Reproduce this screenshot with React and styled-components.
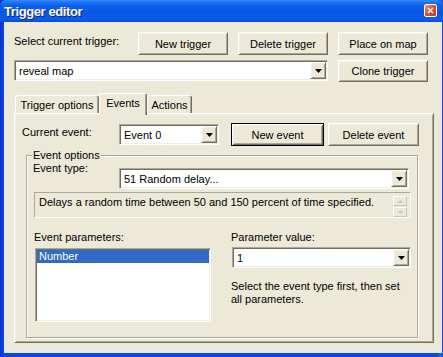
import React from 'react';
import styled, { createGlobalStyle, css } from 'styled-components';

const GlobalStyle = createGlobalStyle`
  html, body {
    margin: 0;
    padding: 0;
    background: #0842d8;
  }
  body {
    font-family: "Liberation Sans", Arial, sans-serif;
    font-size: 11px;
    color: #000;
  }
  * {
    box-sizing: border-box;
  }
`;

const raised = css`
  border: 1px solid;
  border-color: #fff #716f64 #716f64 #fff;
  box-shadow: inset 1px 1px #f1efe2, inset -1px -1px #aca899;
`;

const sunken = css`
  border: 1px solid;
  border-color: #aca899 #fff #fff #aca899;
  box-shadow: inset 1px 1px #716f64, inset -1px -1px #f1efe2;
`;

const Window = styled.div`
  width: 443px;
  height: 357px;
  display: flex;
  flex-direction: column;
  overflow: hidden;
  background: linear-gradient(to right, #0831d9 0, #0b47e3 4px, #0b47e3 437px, #166aee 440px, #0c4fe6 443px);
`;

const TitleBar = styled.div`
  height: 22px;
  flex: none;
  display: flex;
  align-items: center;
  justify-content: space-between;
  padding: 0 6px 0 4px;
  border-radius: 6px 6px 0 0;
  background: linear-gradient(
    to bottom,
    #3d8dfb 0%,
    #1c74f6 10%,
    #0a61ec 25%,
    #0857e6 55%,
    #085ceb 80%,
    #0a5be6 92%,
    #0846d4 100%
  );
`;

const Title = styled.span`
  color: #fff;
  font-family: "Liberation Sans", Arial, sans-serif;
  font-weight: bold;
  font-size: 13px;
  letter-spacing: -0.4px;
  text-shadow: 1px 1px #0f1f8a;
`;

const CloseButton = styled.span`
  width: 13px;
  height: 13px;
  margin-top: -1px;
  border: 1px solid #fff;
  border-radius: 2px;
  background: linear-gradient(135deg, #f09a7c 0%, #e2532b 45%, #c8381a 100%);
  display: flex;
  align-items: center;
  justify-content: center;
`;

const Frame = styled.div`
  flex: 1;
  display: flex;
  padding: 0 5px 4px 4px;
`;

const Body = styled.div`
  flex: 1;
  display: flex;
  flex-direction: column;
  background: #ece9d8;
  padding: 10px 8px 10px 10px;
`;

const TopGrid = styled.div`
  display: grid;
  grid-template-columns: 114px 90px 90px 90px;
  grid-template-rows: 23px 22px;
  column-gap: 10px;
  row-gap: 5px;
`;

const Label = styled.span`
  display: block;
  line-height: 13px;
  white-space: nowrap;
  padding-top: ${p => p.$top || 0}px;
  width: ${p => (p.$w ? `${p.$w}px` : 'auto')};
  flex: none;
`;

const Button = styled.div`
  width: ${p => (p.$w ? `${p.$w}px` : 'auto')};
  height: ${p => p.$h || 23}px;
  margin-left: ${p => p.$left || 0}px;
  background: #ece9d8;
  display: flex;
  align-items: center;
  justify-content: center;
  flex: none;
  ${p =>
    p.$default
      ? css`
          border: 1px solid #000;
          box-shadow: inset 1px 1px #fff, inset -1px -1px #716f64,
            inset 2px 2px #f1efe2, inset -2px -2px #aca899;
        `
      : raised}
`;

const Combo = styled.div`
  grid-column: ${p => p.$span || 'auto'};
  width: ${p => (p.$w ? `${p.$w}px` : 'auto')};
  flex: ${p => (p.$grow ? 1 : 'none')};
  height: 21px;
  margin-top: ${p => p.$top || 0}px;
  margin-left: ${p => p.$left || 0}px;
  background: #fff;
  ${sunken};
  padding: 1px;
  display: flex;
`;

const ComboText = styled.span`
  flex: 1;
  padding-left: 3px;
  display: flex;
  align-items: center;
`;

const ComboArrow = styled.span`
  width: 16px;
  background: #ece9d8;
  ${raised};
  display: flex;
  align-items: center;
  justify-content: center;
`;

const TabStrip = styled.div`
  margin-top: 11px;
  height: 20px;
  display: flex;
  align-items: flex-end;
  padding-left: 1px;
`;

const Tab = styled.div`
  width: ${p => p.$w}px;
  height: ${p => (p.$active ? 22 : 18)}px;
  margin-bottom: ${p => (p.$active ? -2 : 0)}px;
  padding-bottom: ${p => (p.$active ? 4 : 0)}px;
  position: relative;
  z-index: ${p => (p.$active ? 1 : 0)};
  background: #ece9d8;
  border: 1px solid;
  border-bottom: none;
  border-color: #fff #716f64 #fff #fff;
  border-radius: 3px 3px 0 0;
  box-shadow: inset -1px 0 #aca899;
  display: flex;
  align-items: center;
  justify-content: center;
`;

const Panel = styled.div`
  flex: 1;
  display: flex;
  flex-direction: column;
  ${raised};
  padding: 9px 7px 4px 7px;
`;

const EventRow = styled.div`
  display: flex;
  align-items: flex-start;
  height: 23px;
`;

const Group = styled.div`
  flex: 1;
  position: relative;
  margin: 9px 8px 0 4px;
  border: 1px solid #aca899;
  box-shadow: inset 1px 1px #fff, 1px 1px #fff;
  padding: 4px 6px 0 6px;
  display: flex;
  flex-direction: column;
`;

const Legend = styled.span`
  position: absolute;
  top: -7px;
  left: 5px;
  padding: 0 1px;
  line-height: 13px;
  background: #ece9d8;
`;

const TypeRow = styled.div`
  display: flex;
  align-items: flex-start;
  padding-right: 2px;
`;

const Description = styled.div`
  margin: 3px 0 0 1px;
  height: 26px;
  border: 1px solid;
  border-color: #aca899 #fff #fff #aca899;
  display: flex;
  padding: 2px 3px 0 4px;
`;

const DescText = styled.span`
  flex: 1;
  line-height: 13px;
  padding-top: 1px;
`;

const ScrollButtons = styled.div`
  display: flex;
  flex-direction: column;
  gap: 1px;
  padding-top: 1px;
`;

const ScrollButton = styled.span`
  width: 14px;
  height: 10px;
  border: 1px solid;
  border-color: #fff #c9c6b8 #c9c6b8 #fff;
  display: flex;
  align-items: center;
  justify-content: center;
`;

const Columns = styled.div`
  display: grid;
  grid-template-columns: 177px 180px;
  column-gap: 20px;
  margin: 13px 0 0 1px;
`;

const Column = styled.div`
  display: flex;
  flex-direction: column;
`;

const ListBox = styled.div`
  width: 176px;
  height: 74px;
  margin: 4px 0 0 1px;
  background: #fff;
  ${sunken};
  padding: 1px;
`;

const ListItem = styled.div`
  height: 13px;
  line-height: 13px;
  padding-left: 2px;
  background: ${p => (p.$selected ? '#316ac5' : 'transparent')};
  color: ${p => (p.$selected ? '#fff' : '#000')};
`;

const HelpText = styled.p`
  margin: 12px 0 0 0;
  line-height: 13px;
  width: 180px;
`;

const Arrow = () => (
  <svg width="7" height="4" viewBox="0 0 7 4">
    <polygon points="0,0 7,0 3.5,4" fill="#000" />
  </svg>
);

const SmallArrow = ({ up }) => (
  <svg width="5" height="3" viewBox="0 0 5 3">
    <polygon points={up ? '0,3 5,3 2.5,0' : '0,0 5,0 2.5,3'} fill="#c9c6b8" />
  </svg>
);

const ComboBox = ({ value, ...rest }) => (
  <Combo {...rest}>
    <ComboText>{value}</ComboText>
    <ComboArrow>
      <Arrow />
    </ComboArrow>
  </Combo>
);

export default function App() {
  return (
    <Window>
      <GlobalStyle />
      <TitleBar>
        <Title>Trigger editor</Title>
        <CloseButton>
          <svg width="7" height="7" viewBox="0 0 7 7">
            <path d="M1 1 L6 6 M6 1 L1 6" stroke="#fff" strokeWidth="1.6" />
          </svg>
        </CloseButton>
      </TitleBar>
      <Frame>
        <Body>
          <TopGrid>
            <Label $top={3}>Select current trigger:</Label>
            <Button>New trigger</Button>
            <Button>Delete trigger</Button>
            <Button>Place on map</Button>
            <ComboBox $span="1 / 4" value="reveal map" />
            <Button $h={22}>Clone trigger</Button>
          </TopGrid>

          <TabStrip>
            <Tab $w={84}>Trigger options</Tab>
            <Tab $w={48} $active>Events</Tab>
            <Tab $w={45}>Actions</Tab>
          </TabStrip>

          <Panel>
            <EventRow>
              <Label $w={97} $top={3}>Current event:</Label>
              <ComboBox $w={100} $top={1} value="Event 0" />
              <Button $w={93} $left={12} $default>New event</Button>
              <Button $w={91} $left={4}>Delete event</Button>
            </EventRow>

            <Group>
              <Legend>Event options</Legend>
              <TypeRow>
                <Label $w={86} $top={2}>Event type:</Label>
                <ComboBox $top={8} $grow value="51 Random delay..." />
              </TypeRow>

              <Description>
                <DescText>Delays a random time between 50 and 150 percent of time specified.</DescText>
                <ScrollButtons>
                  <ScrollButton>
                    <SmallArrow up />
                  </ScrollButton>
                  <ScrollButton>
                    <SmallArrow />
                  </ScrollButton>
                </ScrollButtons>
              </Description>

              <Columns>
                <Column>
                  <Label>Event parameters:</Label>
                  <ListBox>
                    <ListItem $selected>Number</ListItem>
                  </ListBox>
                </Column>
                <Column>
                  <Label>Parameter value:</Label>
                  <ComboBox $top={3} $left={1} $w={179} value="1" />
                  <HelpText>Select the event type first, then set all parameters.</HelpText>
                </Column>
              </Columns>
            </Group>
          </Panel>
        </Body>
      </Frame>
    </Window>
  );
}
